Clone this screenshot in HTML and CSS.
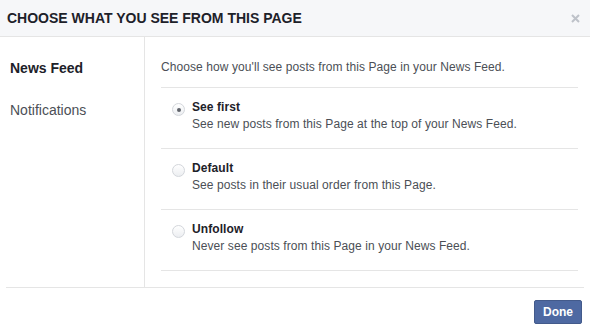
FILE: index.html
```html
<!DOCTYPE html>
<html lang="en">
<head>
    <meta charset="UTF-8">
    <title>Choose What You See</title>
    <link rel="stylesheet" href="styles.css">
</head>
<body>
    <div class="dialog">
        <div class="header">
            <h2>Choose what you see from this Page</h2>
            <span class="close">
                <svg width="9" height="9" viewBox="0 0 9 9"><path d="M1 1L8 8M8 1L1 8" stroke="#bec2c9" stroke-width="2"/></svg>
            </span>
        </div>

        <div class="main">
            <ul class="sidebar">
                <li class="active">News Feed</li>
                <li>Notifications</li>
            </ul>

            <div class="content">
                <p class="intro">Choose how you'll see posts from this Page in your News Feed.</p>

                <label class="option">
                    <span class="radio checked"></span>
                    <span class="text">
                        <span class="title">See first</span>
                        <span class="desc">See new posts from this Page at the top of your News Feed.</span>
                    </span>
                </label>
                <label class="option">
                    <span class="radio"></span>
                    <span class="text">
                        <span class="title">Default</span>
                        <span class="desc">See posts in their usual order from this Page.</span>
                    </span>
                </label>
                <label class="option">
                    <span class="radio"></span>
                    <span class="text">
                        <span class="title">Unfollow</span>
                        <span class="desc">Never see posts from this Page in your News Feed.</span>
                    </span>
                </label>
            </div>
        </div>

        <div class="footer">
            <button type="button">Done</button>
        </div>
    </div>
</body>
</html>
```

FILE: styles.css
```css
body {
    font-family: "Liberation Sans", Arial, sans-serif;
    background-color: #fff;
    color: #4b4f56;
    margin: 0;
}
.header {
    height: 36px;
    background: #f6f7f9;
    border-bottom: 1px solid #e5e5e5;
    display: flex;
    align-items: center;
    justify-content: space-between;
    padding: 0 10px 0 7px;
}
.header h2 {
    margin: 0;
    font-size: 14px;
    font-weight: bold;
    text-transform: uppercase;
    color: #1d2129;
}
.close {
    display: flex;
    margin-top: 1px;
}
.main {
    display: flex;
    margin: 0 6px;
    border-bottom: 1px solid #e5e5e5;
}
.sidebar {
    list-style: none;
    margin: 0;
    padding: 10px 0 0 4px;
    width: 134px;
    border-right: 1px solid #e5e5e5;
}
.sidebar li {
    font-size: 14px;
    line-height: 18px;
    padding: 12px 0;
    color: #4b4f56;
}
.sidebar li.active {
    font-weight: bold;
    color: #1d2129;
}
.content {
    flex: 1;
    padding: 0 6px 16px 16px;
}
.intro {
    margin: 0;
    font-size: 12px;
    line-height: 16px;
    letter-spacing: 0.08px;
    padding: 22px 0 12px;
    border-bottom: 1px solid #e5e5e5;
}
.option {
    display: flex;
    padding: 11px 0 16px 11px;
    border-bottom: 1px solid #e5e5e5;
    font-size: 12px;
    letter-spacing: 0.08px;
}
.radio {
    width: 11px;
    height: 11px;
    border: 1px solid #d3d6db;
    border-radius: 50%;
    background: linear-gradient(#fff, #eceef1);
    margin: 4px 7px 0 0;
    display: flex;
    align-items: center;
    justify-content: center;
    flex-shrink: 0;
}
.radio.checked::after {
    content: "";
    width: 4px;
    height: 4px;
    border-radius: 50%;
    background: #5f636a;
}
.text {
    display: flex;
    flex-direction: column;
}
.title {
    font-weight: bold;
    color: #1d2129;
    line-height: 17px;
}
.desc {
    line-height: 16px;
}
.footer {
    display: flex;
    justify-content: flex-end;
    padding: 12px 8px;
}
button {
    background-color: #4e69a2;
    border: 1px solid #435a8b;
    color: #fff;
    font-family: inherit;
    font-size: 12px;
    font-weight: bold;
    height: 24px;
    padding: 0 8px;
    border-radius: 2px;
    cursor: pointer;
}
```
